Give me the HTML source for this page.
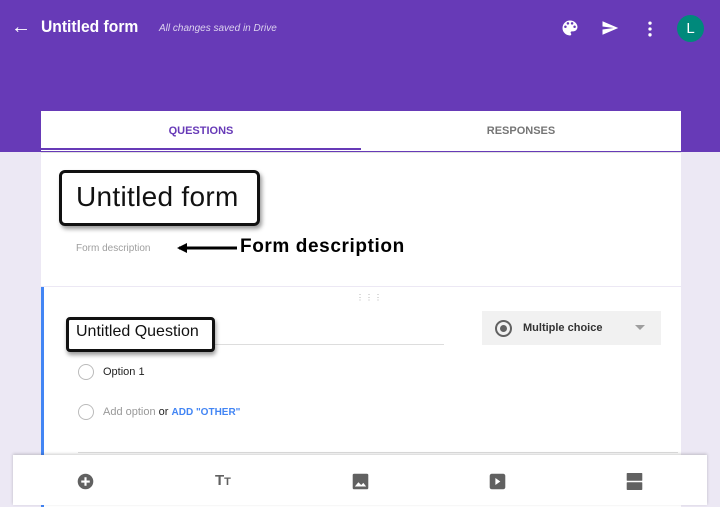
<!DOCTYPE html>
<html><head><style>
body{margin:0;width:720px;height:505px;overflow:hidden;background:#ece8f4;font-family:"Liberation Sans",sans-serif;position:relative}
.top{position:absolute;left:0;top:0;width:720px;height:152px;background:#673ab7}
.abs{position:absolute}
.card{position:absolute;left:41px;width:640px;background:#fff}
</style></head><body>
<div class="top"></div>
<div class="abs" style="left:11px;top:16px;color:#fff;font-size:20px">&#8592;</div>
<div class="abs" style="left:41px;top:17px;color:#fff;font-size:17px;font-weight:bold;transform:scaleX(.92);transform-origin:left">Untitled form</div>
<div class="abs" style="left:159px;top:23px;color:#ddd3ef;font-size:10px;font-style:italic">All changes saved in Drive</div>
<svg class="abs" style="left:560px;top:18px" width="20" height="20" viewBox="0 0 24 24"><path fill="#fff" d="M12 3a9 9 0 0 0 0 18c.8 0 1.5-.7 1.5-1.5 0-.4-.1-.7-.4-1-.2-.3-.4-.6-.4-1 0-.8.7-1.5 1.5-1.5H16a5 5 0 0 0 5-5c0-4.4-4-8-9-8zM6.5 12a1.5 1.5 0 1 1 0-3 1.5 1.5 0 0 1 0 3zm3-4a1.5 1.5 0 1 1 0-3 1.5 1.5 0 0 1 0 3zm5 0a1.5 1.5 0 1 1 0-3 1.5 1.5 0 0 1 0 3zm3 4a1.5 1.5 0 1 1 0-3 1.5 1.5 0 0 1 0 3z"/></svg>
<svg class="abs" style="left:600px;top:19px" width="20" height="18" viewBox="0 0 24 24"><path fill="#fff" d="M2 21l21-9L2 3v7l15 2-15 2z"/></svg>
<svg class="abs" style="left:640px;top:19px" width="20" height="20" viewBox="0 0 24 24"><circle cx="12" cy="5" r="2" fill="#fff"/><circle cx="12" cy="12" r="2" fill="#fff"/><circle cx="12" cy="19" r="2" fill="#fff"/></svg>
<div class="abs" style="left:677px;top:15px;width:27px;height:27px;border-radius:50%;background:#00897b;color:#fff;font-size:15px;text-align:center;line-height:27px">L</div>

<div class="card" style="top:111px;height:40px">
<div class="abs" style="left:0;width:320px;top:14px;text-align:center;color:#673ab7;font-size:11px;font-weight:bold">QUESTIONS</div>
<div class="abs" style="left:320px;width:320px;top:14px;text-align:center;color:#757575;font-size:11px;font-weight:bold">RESPONSES</div>
<div class="abs" style="left:0;width:320px;top:37px;height:2px;background:#673ab7"></div>
</div>
<div class="card" style="top:152px;height:133px;border-top:1px solid #e0e0e0">
<div class="abs" style="left:18px;top:17px;width:195px;height:50px;border:3px solid #111;border-radius:6px;box-shadow:2px 3px 4px rgba(0,0,0,.4)"></div>
<div class="abs" style="left:35px;top:28px;font-size:28px;color:#111;letter-spacing:.3px">Untitled form</div>
<div class="abs" style="left:35px;top:90px;font-size:10px;color:#9e9e9e">Form description</div>
<svg class="abs" style="left:136px;top:89px" width="62" height="12"><path d="M2 6h58" stroke="#000" stroke-width="3"/><path d="M0 6l10-5v10z" fill="#000"/></svg>
<div class="abs" style="left:199px;top:83px;font-size:19px;font-weight:bold;color:#000;letter-spacing:.6px">Form description</div>
</div>
<div class="card" style="top:287px;height:220px;border-left:3px solid #4285f4;width:637px">
<div class="abs" style="left:312px;top:6px;color:#aaa;font-size:8px;letter-spacing:1px">⋮⋮⋮</div>
<div class="abs" style="left:30px;top:57px;width:370px;height:1px;background:#ddd"></div>
<div class="abs" style="left:22px;top:30px;width:143px;height:29px;border:3px solid #111;border-radius:4px;box-shadow:1px 3px 4px rgba(0,0,0,.4);background:#fff"></div>
<div class="abs" style="left:32px;top:36px;font-size:16px;color:#111">Untitled Question</div>
<div class="abs" style="left:438px;top:24px;width:179px;height:34px;background:#f1f1f1"></div>
<div class="abs" style="left:451px;top:33px;width:13px;height:13px;border:2px solid #616161;border-radius:50%"></div>
<div class="abs" style="left:456px;top:38px;width:7px;height:7px;background:#616161;border-radius:50%"></div>
<div class="abs" style="left:479px;top:35px;font-size:11px;font-weight:bold;color:#333">Multiple choice</div>
<div class="abs" style="left:591px;top:38px;border:5px solid transparent;border-top:5px solid #9e9e9e"></div>
<div class="abs" style="left:34px;top:77px;width:14px;height:14px;border:1.5px solid #bbb;border-radius:50%"></div>
<div class="abs" style="left:59px;top:79px;font-size:11px;color:#222">Option 1</div>
<div class="abs" style="left:34px;top:117px;width:14px;height:14px;border:1.5px solid #bbb;border-radius:50%"></div>
<div class="abs" style="left:59px;top:119px;font-size:11px;color:#999">Add option <span style="color:#222">or</span> <span style="color:#4285f4;font-size:10px;font-weight:bold">ADD "OTHER"</span></div>
<div class="abs" style="left:34px;top:165px;width:600px;height:1px;background:#ddd"></div>
</div>
<div class="abs" style="left:13px;top:455px;width:694px;height:50px;background:#fff;box-shadow:0 -1px 3px rgba(0,0,0,.2)">
<svg class="abs" style="left:64px;top:18px" width="17" height="17" viewBox="0 0 24 24"><circle cx="12" cy="12" r="11" fill="#616161"/><path d="M12 6v12M6 12h12" stroke="#fff" stroke-width="3"/></svg>
<div class="abs" style="left:202px;top:17px;font-size:15px;font-weight:bold;color:#616161">T<span style="font-size:11px">T</span></div>
<svg class="abs" style="left:339px;top:18px" width="17" height="17" viewBox="0 0 24 24"><rect x="1" y="1" width="22" height="22" rx="2" fill="#616161"/><path d="M4 19l5-6 4 4 3-3 4 5z" fill="#fff"/></svg>
<svg class="abs" style="left:476px;top:18px" width="17" height="17" viewBox="0 0 24 24"><rect x="1" y="1" width="22" height="22" rx="3" fill="#616161"/><path d="M9 7l7 5-7 5z" fill="#fff"/></svg>
<svg class="abs" style="left:613px;top:17px" width="17" height="19" viewBox="0 0 24 26"><rect x="1" y="1" width="22" height="11" rx="1" fill="#616161"/><rect x="1" y="14" width="22" height="11" rx="1" fill="#616161"/></svg>
</div>
</body></html>
